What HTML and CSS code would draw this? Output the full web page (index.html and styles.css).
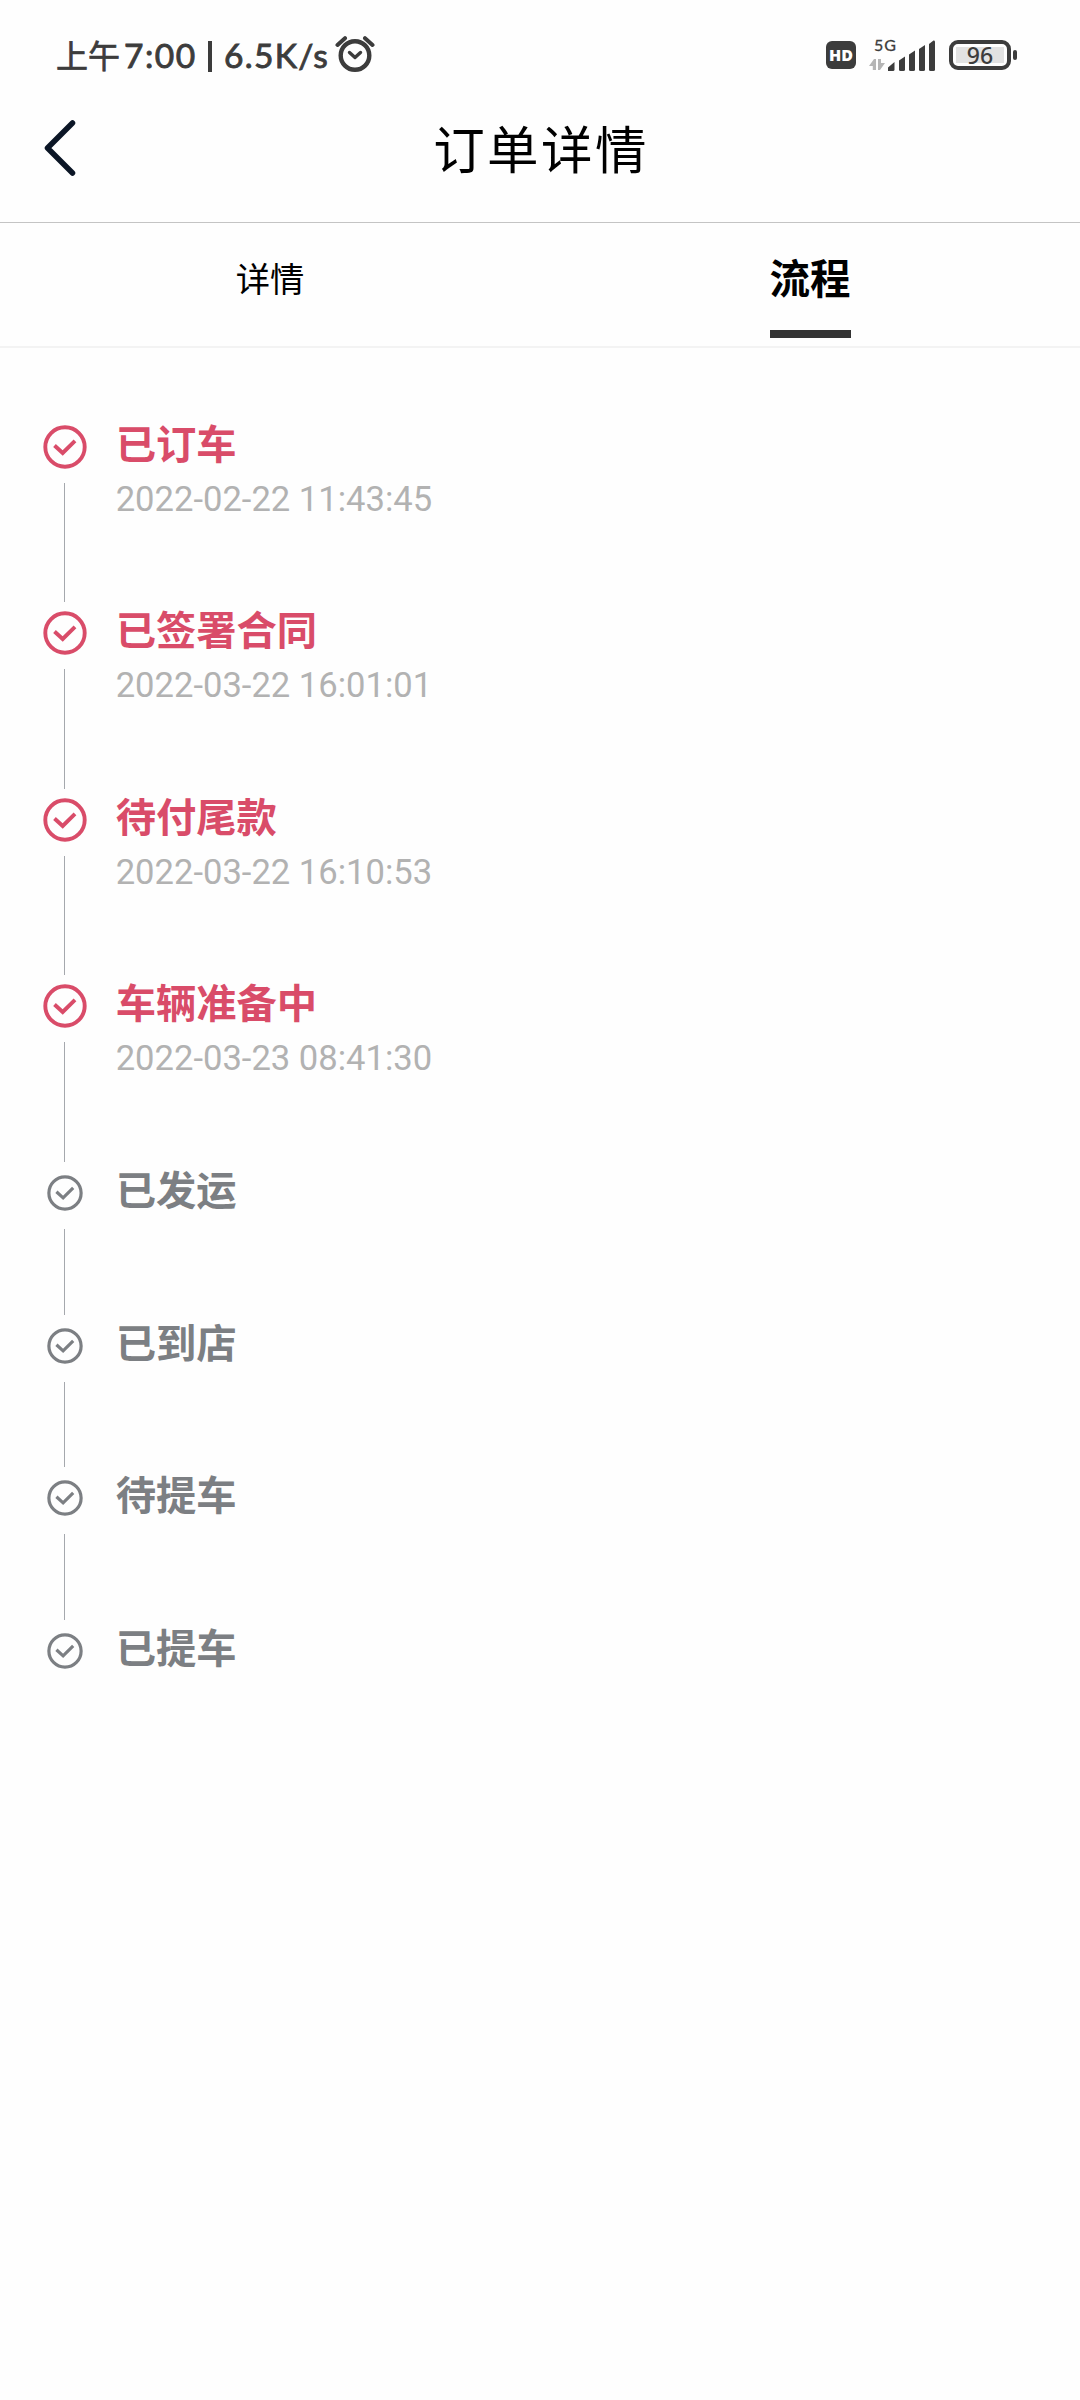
FILE: index.html
```
<!DOCTYPE html>
<html lang="zh-CN">
<head>
<meta charset="utf-8">
<title>订单详情</title>
<link rel="stylesheet" href="styles.css">
</head>
<body>
<svg class="defs" width="0" height="0">
  <symbol id="check" viewBox="0 0 44 44">
    <circle cx="22" cy="22" r="19.700" fill="none" stroke="currentColor" stroke-width="3.900"/>
    <path d="M11.500 20.500L19.700 28L32 15.800" fill="none" stroke="currentColor" stroke-width="3.900"/>
  </symbol>
</svg>

<div class="status">
  <span class="clock-cn">上午</span><span class="clock">7:00</span><i class="bar"></i><span class="speed">6.5K/s</span>
  <svg class="alarm" width="40" height="38" viewBox="0 0 40 38" fill="none" stroke="#3c3c3c">
    <circle cx="20" cy="20.5" r="14.3" stroke-width="4.400"/>
    <path d="M14.5 17.5L20 22.5L25.500 17.500" stroke-width="3.4" stroke-linecap="round" stroke-linejoin="round"/>
    <path d="M2.500 10L10 3.200M30 3.200L37.500 10" stroke-width="4" stroke-linecap="round"/>
  </svg>
  <span class="hd">HD</span>
  <div class="signal">
    <span class="net">5G</span>
    <svg width="68" height="32" viewBox="0 0 68 32">
      <path d="M7 19V30H3.800V26L0 26L5 19ZM9 30V19H12V23L16 23L11 30Z" fill="#b5b5b5"/>
      <g fill="#3c3c3c">
        <path d="M19 31V27.500L25.500 22V29.500Q25.500 31 24 31Z"/>
        <path d="M30 20.500L36 16.500V29.500Q36 31 34.500 31H31.500Q30 31 30 29.500Z"/>
        <path d="M40 14.500L46 10.500V29.500Q46 31 44.500 31H41.500Q40 31 40 29.500Z"/>
        <path d="M50 9L56 5V29.500Q56 31 54.500 31H51.500Q50 31 50 29.500Z"/>
        <path d="M60 4L64.500 .6Q66 0 66 2V29.500Q66 31 64.500 31H61.500Q60 31 60 29.500Z"/>
      </g>
    </svg>
  </div>
  <div class="battery"><span class="level">96</span></div><i class="tip"></i>
</div>

<header class="header">
  <svg class="back" width="32" height="56" viewBox="0 0 32 56" fill="none" stroke="#0b1626" stroke-width="5.500" stroke-linecap="round" stroke-linejoin="round">
    <path d="M28.500 3L3.500 28L28.500 53"/>
  </svg>
  <h1 class="title">订单详情</h1>
</header>

<nav class="tabs">
  <a class="tab">详情</a>
  <a class="tab active">流程</a>
</nav>

<ol class="steps">
  <li class="step done"><div class="rail"><svg class="icon"><use href="#check"/></svg><i class="line"></i></div><div class="body"><b class="name">已订车</b><time class="time">2022-02-22 11:43:45</time></div></li>
  <li class="step done"><div class="rail"><svg class="icon"><use href="#check"/></svg><i class="line"></i></div><div class="body"><b class="name">已签署合同</b><time class="time">2022-03-22 16:01:01</time></div></li>
  <li class="step done"><div class="rail"><svg class="icon"><use href="#check"/></svg><i class="line"></i></div><div class="body"><b class="name">待付尾款</b><time class="time">2022-03-22 16:10:53</time></div></li>
  <li class="step done"><div class="rail"><svg class="icon"><use href="#check"/></svg><i class="line"></i></div><div class="body"><b class="name">车辆准备中</b><time class="time">2022-03-23 08:41:30</time></div></li>
  <li class="step"><div class="rail"><svg class="icon"><use href="#check"/></svg><i class="line"></i></div><div class="body"><b class="name">已发运</b></div></li>
  <li class="step"><div class="rail"><svg class="icon"><use href="#check"/></svg><i class="line"></i></div><div class="body"><b class="name">已到店</b></div></li>
  <li class="step"><div class="rail"><svg class="icon"><use href="#check"/></svg><i class="line"></i></div><div class="body"><b class="name">待提车</b></div></li>
  <li class="step"><div class="rail"><svg class="icon"><use href="#check"/></svg></div><div class="body"><b class="name">已提车</b></div></li>
</ol>
</body>
</html>
```
FILE: styles.css
```
* { box-sizing: border-box; }
body {
  margin: 0;
  min-height: 2400px;
  background: #fefefe;
  color: #000;
  font-family: Roboto, "Noto Sans CJK SC", sans-serif;
}
.defs { display: block; }

.status {
  display: flex;
  align-items: center;
  height: 110px;
  padding-left: 56px;
  color: #3c3c3c;
  font: 400 33.500px/40px Lato, "Noto Sans CJK SC", sans-serif;
  white-space: nowrap;
}
.clock-cn { width: 68px; margin-top: -2px; font-size: 32px; font-family: "Noto Sans CJK SC", sans-serif; -webkit-text-stroke: .7px; }
.clock, .speed { -webkit-text-stroke: .9px; }
.clock { width: 84px; letter-spacing: 1.500px; }
.bar { width: 4px; height: 31px; margin: 2px 12px 0 0; background: #3c3c3c; }
.speed { width: 111px; letter-spacing: 1.300px; }
.alarm { flex: none; margin-top: -2px; }
.hd {
  width: 30px;
  height: 28px;
  margin-left: 451px;
  border-radius: 6px;
  background: #3c3c3c;
  color: #fff;
  font: 800 16px/28px "Open Sans", sans-serif;
  text-align: center;
}
.signal { width: 68px; margin-left: 13px; height: 34px; display: flex; flex-direction: column; justify-content: flex-end; }
.net { height: 0; padding-left: 5px; font: 400 16px/9px Lato, sans-serif; letter-spacing: 1px; -webkit-text-stroke: .3px; }
.signal svg { display: block; flex: none; }
.battery {
  width: 62px;
  height: 30px;
  margin-left: 12px;
  padding: 3px;
  border: 4px solid #3c3c3c;
  border-radius: 9px;
}
.level {
  display: block;
  height: 16px;
  background: #e2e2e2;
  font: 500 23px/17px "Noto Sans", sans-serif;
  text-align: center;
}
.tip { width: 4px; height: 10px; margin-left: 2px; border-radius: 2px; background: #3c3c3c; }

.header {
  display: grid;
  grid-template-columns: 100px 1fr 100px;
  height: 113px;
  border-bottom: 1px solid #c4c4c4;
}
.back { margin: 10px 0 0 44px; }
.title {
  margin: 0;
  padding-left: 2px;
  font-size: 51.500px;
  line-height: 84px;
  font-weight: 400;
  letter-spacing: 2.400px;
  text-align: center;
}

.tabs {
  display: grid;
  grid-template-columns: 1fr 1fr;
  justify-items: center;
  height: 125px;
  border-bottom: 2px solid #f3f3f3;
}
.tab { height: 115px; font-size: 34.300px; line-height: 115px; }
.tab.active { border-bottom: 8px solid #333; font-size: 40.500px; line-height: 115px; font-weight: 700; }

.steps { margin: 0; padding: 67.500px 0 0 32px; list-style: none; }
.step { display: flex; height: 152.670px; color: #7c7f83; }
.step.done { height: 186.670px; color: #d94c69; }
.rail { display: flex; flex-direction: column; align-items: center; width: 65px; }
.icon { flex: none; width: 36px; height: 36px; margin: 13px 0 18px; }
.done .icon { width: 44px; height: 44px; margin: 9px 0 14px; }
.line { flex: 1; width: 1px; background: #a5a8ad; }
.body { display: flex; flex-direction: column; padding-left: 18.700px; }
.name { font-size: 40.300px; line-height: 60px; font-weight: 700; }
.time { color: #b2b2b2; font-size: 34.600px; line-height: 40px; margin-top: 3px; }
```
